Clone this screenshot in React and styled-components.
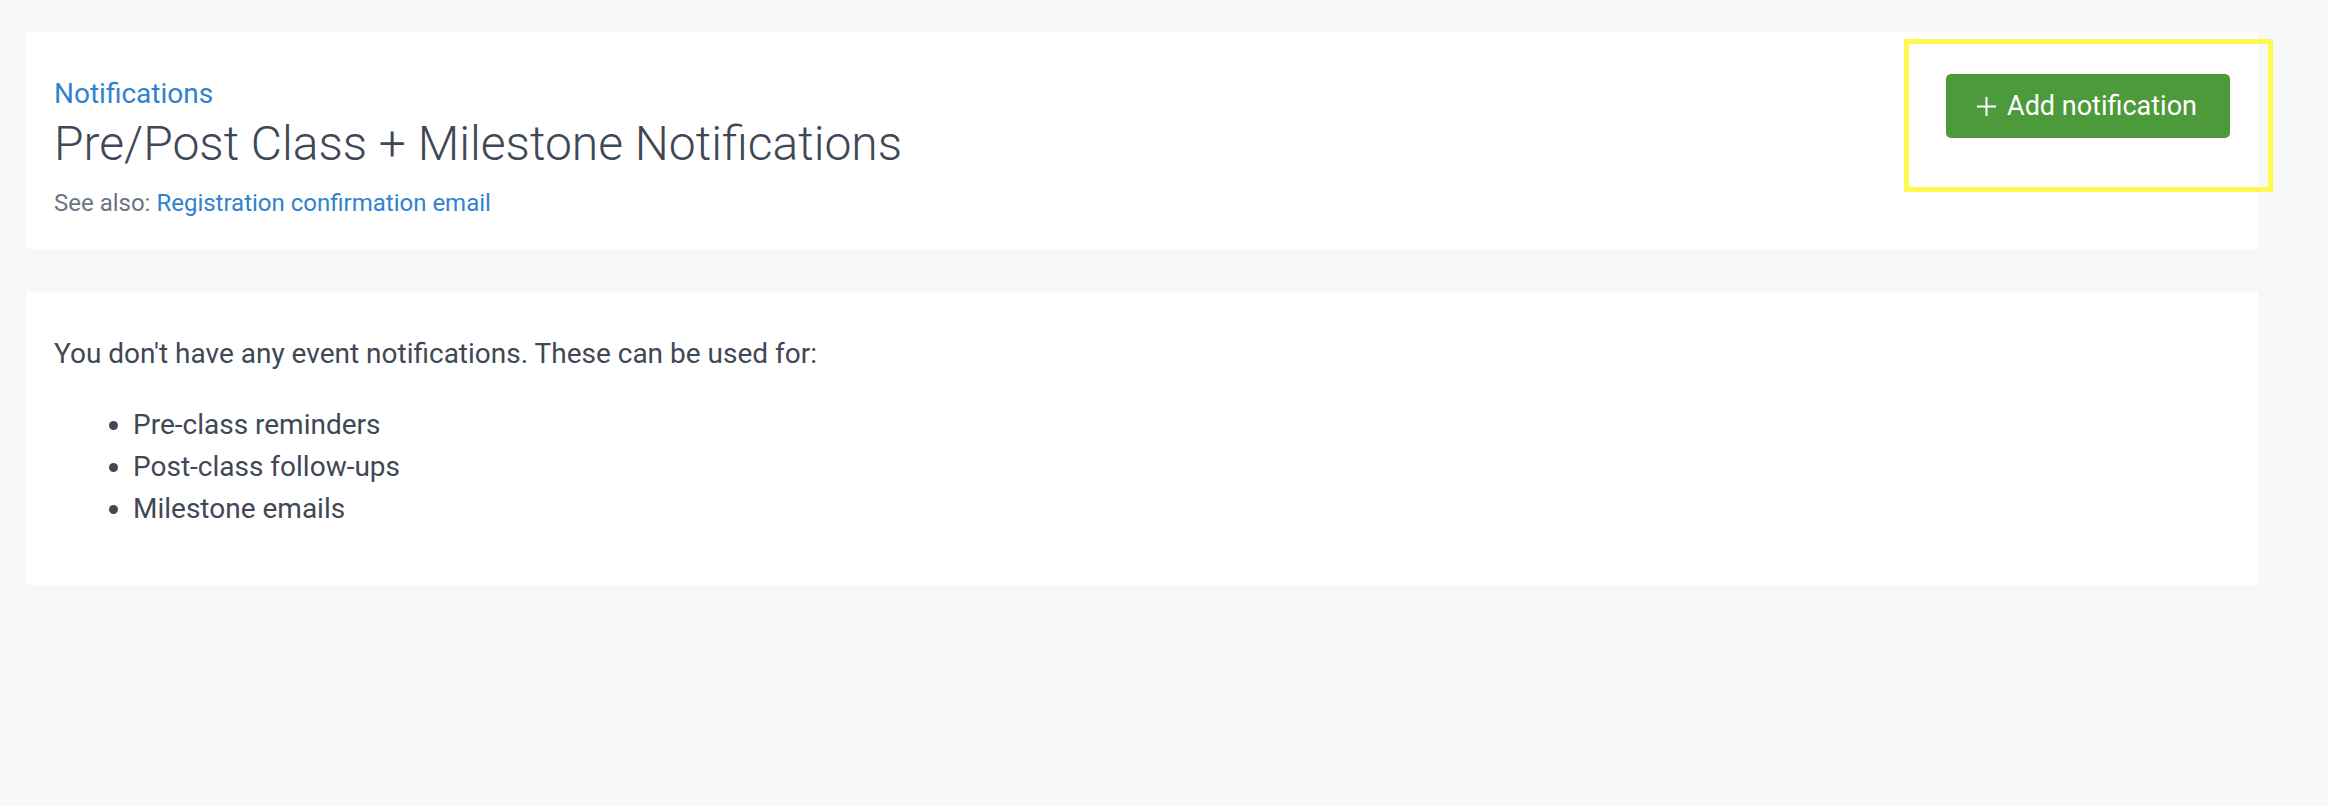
import React from 'react';
import styled, { createGlobalStyle } from 'styled-components';

const GlobalStyle = createGlobalStyle`
    html, body {
        margin: 0;
        padding: 0;
        background-color: #f7f8fa;
        font-family: Roboto, "Liberation Sans", Arial, sans-serif;
        color: #404855;
    }
    * {
        box-sizing: border-box;
    }
`;

const Page = styled.main`
    display: flex;
    flex-direction: column;
    gap: 43px;
    padding: 32px 70px 0 26px;
    min-height: 806px;
`;

const Card = styled.section`
    position: relative;
    background-color: #fff;
    padding: ${props => props.pad || '0 28px'};
    height: ${props => props.h}px;
`;

const HeaderCard = styled(Card)`
    display: flex;
    justify-content: space-between;
    align-items: flex-start;
`;

const TitleBlock = styled.div`
    display: flex;
    flex-direction: column;
    padding-top: 45px;
`;

const Crumb = styled.a`
    font-size: 28px;
    line-height: 1.2;
    color: #3182ce;
    text-decoration: none;
`;

const Title = styled.h1`
    margin: 4px 0 0;
    font-size: 48px;
    font-weight: 300;
    line-height: 1.2;
    color: #404855;
`;

const SeeAlso = styled.p`
    margin: 17px 0 0;
    font-size: 24px;
    line-height: 1.2;
    color: #6b7585;

    a {
        color: #3182ce;
        text-decoration: none;
    }
`;

const AddButton = styled.button`
    margin-top: 42px;
    height: 64px;
    padding: 0 33px 0 31px;
    display: flex;
    align-items: center;
    gap: 11px;
    border: none;
    border-radius: 5px;
    background-color: #4c9a3c;
    color: #fff;
    font-family: inherit;
    font-size: 27px;
    cursor: pointer;
`;

// yellow annotation box drawn over the button
const Highlight = styled.div`
    position: absolute;
    top: 7px;
    right: -15px;
    width: 369px;
    height: 153px;
    border: 5px solid #fff94f;
    pointer-events: none;
`;

const Intro = styled.p`
    margin: 0;
    font-size: 28px;
    line-height: 1.5;
`;

const UseList = styled.ul`
    margin: 29px 0 0;
    padding-left: 79px;
    font-size: 28px;
    line-height: 42px;
`;

const PlusIcon = () => (
    <svg width="19" height="19" viewBox="0 0 19 19" fill="none">
        <path d="M9.5 0v19M0 9.5h19" stroke="#fff" strokeWidth="2" />
    </svg>
);

export default function App() {
    return (
        <>
            <GlobalStyle />
            <Page>
                <HeaderCard h={217}>
                    <TitleBlock>
                        <Crumb href="#">Notifications</Crumb>
                        <Title>Pre/Post Class + Milestone Notifications</Title>
                        <SeeAlso>
                            See also: <a href="#">Registration confirmation email</a>
                        </SeeAlso>
                    </TitleBlock>
                    <AddButton>
                        <PlusIcon />
                        Add notification
                    </AddButton>
                    <Highlight />
                </HeaderCard>
                <Card h={293} pad="41px 28px 0">
                    <Intro>You don't have any event notifications. These can be used for:</Intro>
                    <UseList>
                        <li>Pre-class reminders</li>
                        <li>Post-class follow-ups</li>
                        <li>Milestone emails</li>
                    </UseList>
                </Card>
            </Page>
        </>
    );
}
